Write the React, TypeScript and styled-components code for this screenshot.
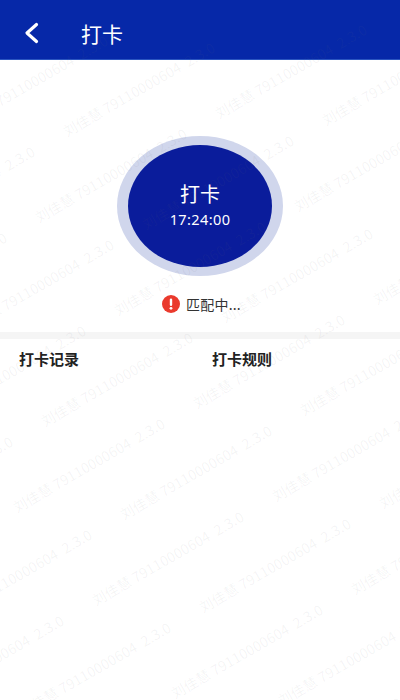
import React from "react";
import styled, { createGlobalStyle } from "styled-components";

const Global = createGlobalStyle`
  html, body { margin: 0; padding: 0; background: #fff; }
  #root { width: 400px; height: 700px; }
  * { box-sizing: border-box; }
`;

const Page = styled.div`
  position: relative;
  width: 400px;
  height: 700px;
  overflow: hidden;
  background: #fff;
  font-family: "Noto Sans CJK SC", "Noto Sans", sans-serif;
`;

const Header = styled.header`
  display: flex;
  align-items: center;
  height: 60px;
  padding: 7px 0 0 23px;
  background: #0628a8;
  border-bottom: 1px solid #2a55c0;
`;

const BackButton = styled.span`
  display: flex;
  width: 58px;
`;

const Title = styled.h1`
  margin: 0;
  color: #fff;
  font-size: 21px;
  font-weight: 400;
  line-height: 28px;
`;

const PunchArea = styled.section`
  display: flex;
  flex-direction: column;
  align-items: center;
  padding-top: 76px;
  height: 272px;
`;

const Ring = styled.div`
  display: flex;
  align-items: center;
  justify-content: center;
  width: 166px;
  height: 140px;
  border-radius: 50%;
  background: #d0d6ec;
`;

const PunchButton = styled.div`
  display: flex;
  flex-direction: column;
  align-items: center;
  width: 144px;
  height: 122px;
  padding-top: 36px;
  border-radius: 50%;
  background: #0a1c9b;
  color: #fff;
`;

const PunchLabel = styled.span`
  font-size: 20px;
  line-height: 26px;
`;

const PunchTime = styled.span`
  margin-top: 2px;
  font-family: "Noto Sans", sans-serif;
  font-size: 14.5px;
  line-height: 20px;
  letter-spacing: 0.4px;
`;

const Status = styled.div`
  display: flex;
  align-items: center;
  gap: 6px;
  margin-top: 18px;
  padding-left: 3px;
  color: #333;
  font-size: 14px;
  line-height: 20px;
  letter-spacing: 0.2px;
`;

const Divider = styled.div`
  height: 7px;
  background: #f5f5f5;
`;

const Tabs = styled.nav`
  display: grid;
  grid-template-columns: 193px 1fr;
  padding: 10px 19px 0;
`;

const Tab = styled.span`
  color: #222;
  font-size: 15px;
  font-weight: 700;
  line-height: 20px;
`;

const Mark = styled.span<{ $x: number; $y: number }>`
  position: absolute;
  left: ${(p) => p.$x}px;
  top: ${(p) => p.$y}px;
  transform-origin: 0 100%;
  transform: translateY(-16px) rotate(-30deg);
  color: rgba(110, 110, 120, 0.07);
  font-size: 14px;
  line-height: 16px;
  white-space: pre;
  pointer-events: none;
  letter-spacing: 0.2px;
`;

const marks: { x: number; y: number }[] = [];
for (let j = -6; j <= 3; j++) {
  for (let i = -2; i <= 3; i++) {
    const x = 18 + i * 259 + j * 79;
    const y = 515 - i * 11 + j * 93;
    if (x > -170 && x < 400 && y > 60 && y < 800) marks.push({ x, y });
    const x2 = x + 107;
    const y2 = y + 7;
    if (x2 > -170 && x2 < 400 && y2 > 60 && y2 < 800) marks.push({ x: x2, y: y2 });
  }
}

export default function App() {
  return (
    <Page>
      <Global />
      <Header>
        <BackButton>
          <svg width="16" height="22" viewBox="0 0 16 22" fill="none">
            <path d="M13.5 2.5 L4 11 L13.5 19.5" stroke="#fff" strokeWidth="3.2" strokeLinecap="round" strokeLinejoin="round" />
          </svg>
        </BackButton>
        <Title>打卡</Title>
      </Header>
      <PunchArea>
        <Ring>
          <PunchButton>
            <PunchLabel>打卡</PunchLabel>
            <PunchTime>17:24:00</PunchTime>
          </PunchButton>
        </Ring>
        <Status>
          <svg width="18" height="18" viewBox="0 0 18 18">
            <circle cx="9" cy="9" r="9" fill="#ea3a2d" />
            <rect x="7.8" y="3.5" width="2.4" height="7.5" rx="1.2" fill="#fff" />
            <circle cx="9" cy="13.3" r="1.4" fill="#fff" />
          </svg>
          <span>匹配中...</span>
        </Status>
      </PunchArea>
      <Divider />
      <Tabs>
        <Tab>打卡记录</Tab>
        <Tab>打卡规则</Tab>
      </Tabs>
      {marks.map((m) => (
        <Mark key={`${m.x}-${m.y}`} $x={m.x} $y={m.y}>
          {"刘佳慧 79110000604  2.3.0"}
        </Mark>
      ))}
    </Page>
  );
}
